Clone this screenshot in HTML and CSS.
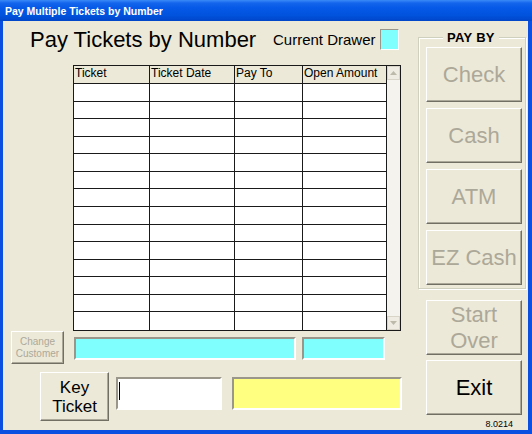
FILE: index.html
```html
<!DOCTYPE html>
<html lang="en">

<head>
    <meta charset="UTF-8">
    <title>Pay Multiple Tickets by Number</title>
    <link rel="stylesheet" href="styles.css">
</head>

<body>
    <div class="window">
        <div class="titlebar">Pay Multiple Tickets by Number</div>
        <div class="client">
            <div class="main">
                <div class="top">
                    <span class="heading">Pay Tickets by Number</span>
                    <span class="drawer-label">Current Drawer</span>
                    <span class="drawer-box"></span>
                </div>
                <div class="grid">
                    <div class="cells">
                        <div class="hd">Ticket</div>
                        <div class="hd">Ticket Date</div>
                        <div class="hd">Pay To</div>
                        <div class="hd">Open Amount</div>
                        <div></div><div></div><div></div><div></div>
                        <div></div><div></div><div></div><div></div>
                        <div></div><div></div><div></div><div></div>
                        <div></div><div></div><div></div><div></div>
                        <div></div><div></div><div></div><div></div>
                        <div></div><div></div><div></div><div></div>
                        <div></div><div></div><div></div><div></div>
                        <div></div><div></div><div></div><div></div>
                        <div></div><div></div><div></div><div></div>
                        <div></div><div></div><div></div><div></div>
                        <div></div><div></div><div></div><div></div>
                        <div></div><div></div><div></div><div></div>
                        <div></div><div></div><div></div><div></div>
                        <div></div><div></div><div></div><div></div>
                    </div>
                    <div class="scroll">
                        <div class="sbtn">
                            <svg width="7" height="4" viewBox="0 0 7 4"><path d="M0 4 L3.5 0 L7 4 Z" fill="#bdbaab"/></svg>
                        </div>
                        <div class="sbtn">
                            <svg width="7" height="4" viewBox="0 0 7 4"><path d="M0 0 L3.5 4 L7 0 Z" fill="#bdbaab"/></svg>
                        </div>
                    </div>
                </div>
                <div class="row2">
                    <button class="btn off change">Change<br>Customer</button>
                    <div class="field cyan wide"></div>
                    <div class="field cyan small"></div>
                </div>
                <div class="row3">
                    <button class="btn key">Key<br>Ticket</button>
                    <div class="field entry"><span class="caret"></span></div>
                    <div class="field yellow"></div>
                </div>
            </div>
            <div class="side">
                <fieldset class="payby">
                    <legend>PAY BY</legend>
                    <div class="stack">
                        <button class="btn off big">Check</button>
                        <button class="btn off big">Cash</button>
                        <button class="btn off big">ATM</button>
                        <button class="btn off big">EZ Cash</button>
                    </div>
                </fieldset>
                <button class="btn off big start">Start<br>Over</button>
                <button class="btn big exit">Exit</button>
                <div class="version">8.0214</div>
            </div>
        </div>
    </div>
</body>

</html>
```

FILE: styles.css
```css
body {
    margin: 0;
    font-family: "Liberation Sans", Arial, sans-serif;
}

.window {
    width: 532px;
    height: 434px;
    display: flex;
    flex-direction: column;
    background: #0b4fe0;
}

.titlebar {
    height: 21px;
    box-sizing: border-box;
    padding: 1px 0 0 5px;
    line-height: 20px;
    font-size: 10.5px;
    font-weight: bold;
    color: #fff;
    background: linear-gradient(#3a8af7 0, #1465ec 3px, #0559e6 8px, #0153de 15px, #0046c8 21px);
}

.client {
    flex: 1;
    margin: 0 4px 4px 3px;
    display: flex;
    background: #ece9d8;
}

.main {
    width: 415px;
}

.top {
    height: 44px;
    box-sizing: border-box;
    padding: 0 0 7px 27px;
    display: flex;
    align-items: center;
}

.heading {
    width: 243px;
    flex-shrink: 0;
    font-size: 22px;
    line-height: 22px;
}

.drawer-label {
    width: 107px;
    flex-shrink: 0;
    font-size: 15px;
    line-height: 16px;
}

.drawer-box {
    width: 19px;
    height: 21px;
    box-sizing: border-box;
    background: #80ffff;
    border: 1px solid;
    border-color: #9a978a #fff #fff #9a978a;
}

.grid {
    margin-left: 70px;
    width: 328px;
    height: 266px;
    box-sizing: border-box;
    border: 1px solid #1a1a1a;
    display: flex;
}

.cells {
    display: grid;
    grid-template-columns: 76px 85px 68px 84px;
    grid-template-rows: 18px repeat(14, 1fr);
    height: 264px;
    background: #fff;
}

.cells div {
    border-right: 1px solid #1a1a1a;
    border-bottom: 1px solid #1a1a1a;
}

.cells div:nth-last-child(-n+4) {
    border-bottom: none;
}

.cells .hd {
    background: #ece9d8;
    font-size: 12px;
    line-height: 15px;
    padding-left: 1px;
    white-space: nowrap;
}

.scroll {
    width: 13px;
    display: flex;
    flex-direction: column;
    justify-content: space-between;
    background: #f4f3ee;
}

.sbtn {
    height: 14px;
    box-sizing: border-box;
    border: 1px solid #d8d5c8;
    background: #eeece3;
    display: flex;
    align-items: center;
    justify-content: center;
}

.btn {
    box-sizing: border-box;
    margin: 0;
    padding: 0;
    font-family: "Liberation Sans", Arial, sans-serif;
    color: #000;
    background: #ece9d8;
    border: 1px solid;
    border-color: #fff #716f64 #716f64 #fff;
    box-shadow: inset -1px -1px #aca899;
    display: flex;
    align-items: center;
    justify-content: center;
    text-align: center;
}

.btn.off {
    color: #aca899;
}

.field {
    box-sizing: border-box;
    height: 23px;
    border: 2px solid;
    border-color: #9a978a #fff #fff #9a978a;
}

.cyan {
    background: #80ffff;
}

.row2 {
    display: flex;
    align-items: flex-start;
    height: 33px;
}

.change {
    margin-left: 8px;
    width: 53px;
    height: 33px;
    font-size: 10px;
    line-height: 12px;
}

.wide {
    margin: 6px 0 0 10px;
    width: 222px;
}

.small {
    margin: 6px 0 0 6px;
    width: 83px;
}

.row3 {
    display: flex;
    align-items: flex-start;
}

.key {
    margin: 8px 0 0 37px;
    width: 69px;
    height: 49px;
    font-size: 17px;
    line-height: 19px;
}

.entry {
    margin: 13px 0 0 7px;
    width: 106px;
    height: 33px;
    background: #fff;
    padding: 3px 0 0 1px;
}

.caret {
    display: block;
    width: 1px;
    height: 18px;
    background: #000;
}

.yellow {
    margin: 13px 0 0 10px;
    width: 170px;
    height: 33px;
    background: #ffff80;
}

.side {
    width: 108px;
    padding-top: 9px;
}

.payby {
    margin: 0;
    width: 108px;
    box-sizing: border-box;
    padding: 2px 3px 3px 7px;
    border: 1px solid #d0d0bf;
    box-shadow: inset 1px 1px #fff, 1px 1px #fff;
}

.payby legend {
    margin-left: 17px;
    padding: 0 4px;
    font-size: 13px;
    line-height: 15px;
    font-weight: bold;
    letter-spacing: 0.3px;
    background: #ece9d8;
}

.stack {
    display: flex;
    flex-direction: column;
    gap: 6px;
}

.big {
    width: 96px;
    height: 55px;
    font-size: 22px;
    line-height: 26px;
}

.start {
    margin: 11px 0 0 8px;
}

.exit {
    margin: 5px 0 0 8px;
}

.version {
    margin-top: 4px;
    padding-right: 13px;
    text-align: right;
    font-size: 9px;
    line-height: 10px;
}
```
